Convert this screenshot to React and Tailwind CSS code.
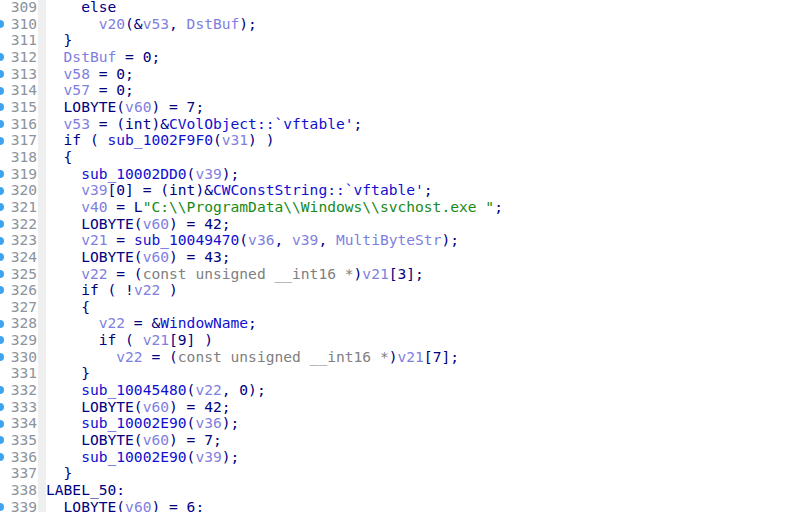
import React from 'react';

// token helpers: k = plain code, v = local var, n = name, t = type, s = string
const k = (x) => ['k', x];
const v = (x) => ['v', x];
const n = (x) => ['n', x];
const t = (x) => ['t', x];
const s = (x) => ['s', x];

const colors = {
  k: 'text-[#000080]',
  v: 'text-[#7f7fe0]',
  n: 'text-[#1010d0]',
  t: 'text-[#808080]',
  s: 'text-[#188a18]',
};

const lines = [
  { no: 309, dot: false, ind: 4, toks: [k('else')] },
  { no: 310, dot: true, ind: 6, toks: [v('v20'), k('(&'), v('v53'), k(', '), v('DstBuf'), k(');')] },
  { no: 311, dot: false, ind: 2, toks: [k('}')] },
  { no: 312, dot: true, ind: 2, toks: [v('DstBuf'), k(' = 0;')] },
  { no: 313, dot: true, ind: 2, toks: [v('v58'), k(' = 0;')] },
  { no: 314, dot: true, ind: 2, toks: [v('v57'), k(' = 0;')] },
  { no: 315, dot: true, ind: 2, toks: [k('LOBYTE('), v('v60'), k(') = 7;')] },
  { no: 316, dot: true, ind: 2, toks: [v('v53'), k(' = (int)&'), n("CVolObject::`vftable'"), k(';')] },
  { no: 317, dot: true, ind: 2, toks: [k('if ( '), n('sub_1002F9F0'), k('('), v('v31'), k(') )')] },
  { no: 318, dot: false, ind: 2, toks: [k('{')] },
  { no: 319, dot: true, ind: 4, toks: [n('sub_10002DD0'), k('('), v('v39'), k(');')] },
  { no: 320, dot: true, ind: 4, toks: [v('v39'), k('[0] = (int)&'), n("CWConstString::`vftable'"), k(';')] },
  { no: 321, dot: true, ind: 4, toks: [v('v40'), k(' = L'), s('"C:\\\\ProgramData\\\\Windows\\\\svchost.exe "'), k(';')] },
  { no: 322, dot: true, ind: 4, toks: [k('LOBYTE('), v('v60'), k(') = 42;')] },
  { no: 323, dot: true, ind: 4, toks: [v('v21'), k(' = '), n('sub_10049470'), k('('), v('v36'), k(', '), v('v39'), k(', '), v('MultiByteStr'), k(');')] },
  { no: 324, dot: true, ind: 4, toks: [k('LOBYTE('), v('v60'), k(') = 43;')] },
  { no: 325, dot: true, ind: 4, toks: [v('v22'), k(' = ('), t('const unsigned __int16 *'), k(')'), v('v21'), k('[3];')] },
  { no: 326, dot: true, ind: 4, toks: [k('if ( !'), v('v22'), k(' )')] },
  { no: 327, dot: false, ind: 4, toks: [k('{')] },
  { no: 328, dot: true, ind: 6, toks: [v('v22'), k(' = &'), n('WindowName'), k(';')] },
  { no: 329, dot: true, ind: 6, toks: [k('if ( '), v('v21'), k('[9] )')] },
  { no: 330, dot: true, ind: 8, toks: [v('v22'), k(' = ('), t('const unsigned __int16 *'), k(')'), v('v21'), k('[7];')] },
  { no: 331, dot: false, ind: 4, toks: [k('}')] },
  { no: 332, dot: true, ind: 4, toks: [n('sub_10045480'), k('('), v('v22'), k(', 0);')] },
  { no: 333, dot: true, ind: 4, toks: [k('LOBYTE('), v('v60'), k(') = 42;')] },
  { no: 334, dot: true, ind: 4, toks: [n('sub_10002E90'), k('('), v('v36'), k(');')] },
  { no: 335, dot: true, ind: 4, toks: [k('LOBYTE('), v('v60'), k(') = 7;')] },
  { no: 336, dot: true, ind: 4, toks: [n('sub_10002E90'), k('('), v('v39'), k(');')] },
  { no: 337, dot: false, ind: 2, toks: [k('}')] },
  { no: 338, dot: false, ind: 0, toks: [k('LABEL_50:')] },
  { no: 339, dot: true, ind: 2, toks: [k('LOBYTE('), v('v60'), k(') = 6;')] },
];

export default function App() {
  return (
    <div className="w-[787px] h-[512px] overflow-hidden bg-white font-['DejaVu_Sans_Mono','Liberation_Mono',monospace] text-[14.6px]">
      <div className="-mt-[1px] flex flex-col">
        {lines.map((line) => (
          <div key={line.no} className="flex h-[16.67px] items-center leading-[16.67px]">
            {/* breakpoint-style marker, half clipped at the left edge */}
            <div className="w-[4px] h-full flex items-center">
              {line.dot && <div className="-ml-[4px] w-[8px] h-[8px] rounded-full bg-[#3fa4f0]" />}
            </div>
            <div className="w-[33px] text-right text-[#8c939c]">{line.no}</div>
            <div className="ml-[1px] w-[8px] h-full bg-[#efefef]" />
            <div className="whitespace-pre">
              {' '.repeat(line.ind)}
              {line.toks.map(([c, x], i) => (
                <span key={i} className={colors[c]}>{x}</span>
              ))}
            </div>
          </div>
        ))}
      </div>
    </div>
  );
}
